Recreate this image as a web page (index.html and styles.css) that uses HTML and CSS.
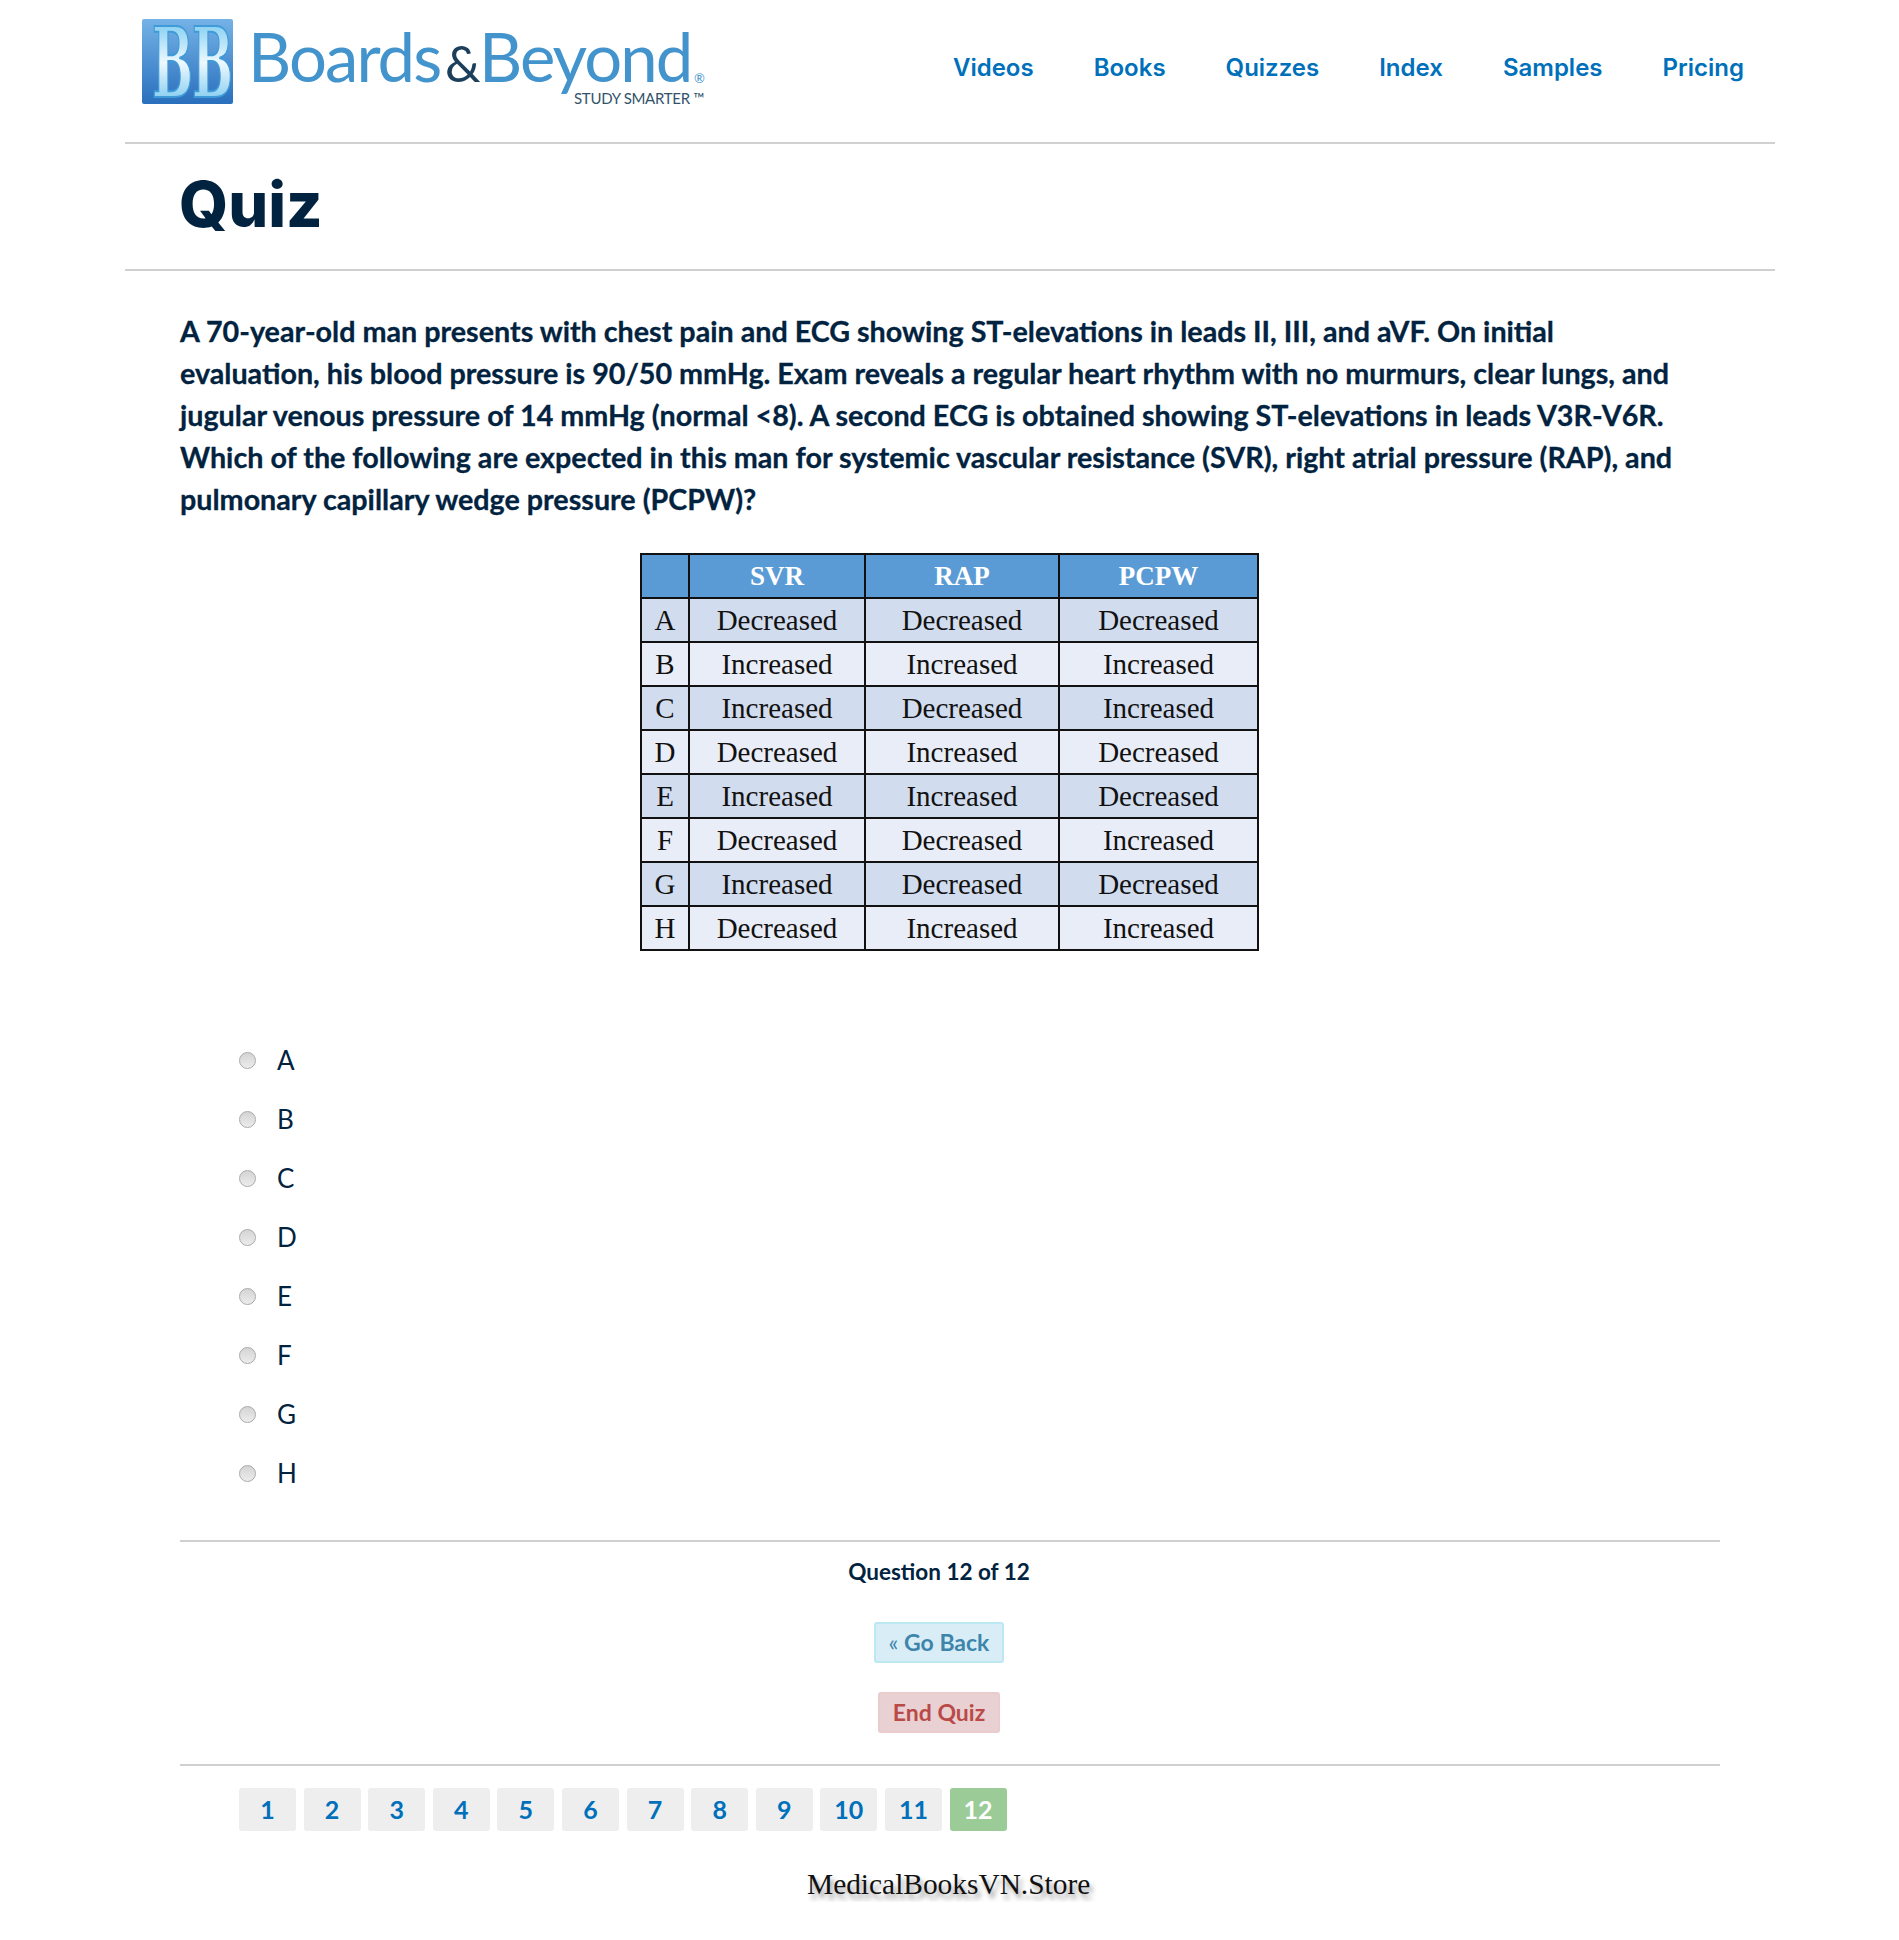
FILE: index.html
```html
<!DOCTYPE html>
<html lang="en">
<head>
    <meta charset="UTF-8">
    <title>Quiz</title>
    <link rel="stylesheet" href="styles.css">
</head>
<body>
    <div class="page">
        <div class="header">
            <svg class="logo" width="580" height="120" viewBox="0 0 580 120">
                <defs>
                    <linearGradient id="tile" x1="0" y1="0" x2="0" y2="1">
                        <stop offset="0" stop-color="#74b2e6"/>
                        <stop offset="1" stop-color="#2a6fbd"/>
                    </linearGradient>
                    <linearGradient id="letter" x1="0" y1="0" x2="0" y2="1">
                        <stop offset="0" stop-color="#58bdec"/>
                        <stop offset="0.5" stop-color="#eef9fe"/>
                        <stop offset="1" stop-color="#4fb6e9"/>
                    </linearGradient>
                </defs>
                <rect x="2" y="19" width="91" height="85" rx="2" fill="url(#tile)"/>
                <text class="logo-bb" transform="translate(12 97) scale(0.5 1)" fill="url(#letter)" stroke="#3f9ad8" stroke-width="2">BB</text>
                <text class="logo-name" y="82"><tspan x="108">Boards</tspan><tspan class="logo-amp" x="305">&amp;</tspan><tspan x="339">Beyond</tspan></text>
                <text class="logo-mark" x="554" y="83">®</text>
                <text class="logo-tag" x="434" y="104">STUDY SMARTER ™</text>
            </svg>
            <div class="nav">
                <a href="#">Videos</a>
                <a href="#">Books</a>
                <a href="#">Quizzes</a>
                <a href="#">Index</a>
                <a href="#">Samples</a>
                <a href="#">Pricing</a>
            </div>
        </div>
        <div class="titlebar"><h1>Quiz</h1></div>
        <div class="content">
            <p class="question">A 70-year-old man presents with chest pain and ECG showing ST-elevations in leads II, III, and aVF. On initial<br>evaluation, his blood pressure is 90/50 mmHg. Exam reveals a regular heart rhythm with no murmurs, clear lungs, and<br>jugular venous pressure of 14 mmHg (normal &lt;8). A second ECG is obtained showing ST-elevations in leads V3R-V6R.<br>Which of the following are expected in this man for systemic vascular resistance (SVR), right atrial pressure (RAP), and<br>pulmonary capillary wedge pressure (PCPW)?</p>
            <table class="grid">
                <tr><th></th><th>SVR</th><th>RAP</th><th>PCPW</th></tr>
                <tr><td>A</td><td>Decreased</td><td>Decreased</td><td>Decreased</td></tr>
                <tr><td>B</td><td>Increased</td><td>Increased</td><td>Increased</td></tr>
                <tr><td>C</td><td>Increased</td><td>Decreased</td><td>Increased</td></tr>
                <tr><td>D</td><td>Decreased</td><td>Increased</td><td>Decreased</td></tr>
                <tr><td>E</td><td>Increased</td><td>Increased</td><td>Decreased</td></tr>
                <tr><td>F</td><td>Decreased</td><td>Decreased</td><td>Increased</td></tr>
                <tr><td>G</td><td>Increased</td><td>Decreased</td><td>Decreased</td></tr>
                <tr><td>H</td><td>Decreased</td><td>Increased</td><td>Increased</td></tr>
            </table>
            <div class="answers">
                <label class="answer"><input type="radio" name="answer">A</label>
                <label class="answer"><input type="radio" name="answer">B</label>
                <label class="answer"><input type="radio" name="answer">C</label>
                <label class="answer"><input type="radio" name="answer">D</label>
                <label class="answer"><input type="radio" name="answer">E</label>
                <label class="answer"><input type="radio" name="answer">F</label>
                <label class="answer"><input type="radio" name="answer">G</label>
                <label class="answer"><input type="radio" name="answer">H</label>
            </div>
            <div class="controls">
                <div class="progress">Question 12 of 12</div>
                <a class="button back" href="#"><span class="arrows">«</span> Go Back</a>
                <a class="button end" href="#">End Quiz</a>
            </div>
            <div class="pages">
                <a href="#">1</a>
                <a href="#">2</a>
                <a href="#">3</a>
                <a href="#">4</a>
                <a href="#">5</a>
                <a href="#">6</a>
                <a href="#">7</a>
                <a href="#">8</a>
                <a href="#">9</a>
                <a href="#">10</a>
                <a href="#">11</a>
                <a class="current" href="#">12</a>
            </div>
        </div>
        <div class="watermark">MedicalBooksVN.Store</div>
    </div>
</body>
</html>
```

FILE: styles.css
```css
body {
    margin: 0;
    background: #fff;
    color: #02233f;
    font-family: "Lato", "Liberation Sans", sans-serif;
}

a {
    text-decoration: none;
}

.page {
    width: 1650px;
    margin-left: 125px;
}

.header {
    height: 142px;
    display: flex;
    justify-content: space-between;
    border-bottom: 2px solid #d0d0d0;
}

.logo {
    margin-left: 15px;
}

.logo-bb {
    font-family: "DejaVu Serif", serif;
    font-size: 97px;
    font-weight: 700;
    letter-spacing: -2px;
}

.logo-name {
    font-family: "Lato", sans-serif;
    font-size: 67px;
    fill: #4394cd;
    letter-spacing: -1.9px;
}

.logo-amp {
    font-size: 50px;
    fill: #1c3f5c;
}

.logo-mark {
    font-family: "Lato", sans-serif;
    font-size: 13px;
    fill: #4394cd;
}

.logo-tag {
    font-family: "Lato", sans-serif;
    font-size: 15px;
    fill: #33536b;
    letter-spacing: -0.3px;
}

.nav {
    display: flex;
    gap: 60px;
    padding: 51px 31px 0 0;
}

.nav a {
    height: 34px;
    color: #0070bb;
    font-family: "Inter", sans-serif;
    font-size: 24px;
    font-weight: 600;
    line-height: 34px;
}

.titlebar {
    height: 125px;
    padding-left: 54px;
    border-bottom: 2px solid #d0d0d0;
}

h1 {
    margin: 0;
    font-family: "Inter", sans-serif;
    font-size: 63px;
    font-weight: 800;
    line-height: 120px;
}

.content {
    padding: 0 55px;
}

.question {
    margin: 39px 0 0;
    font-size: 28.7px;
    font-weight: 700;
    line-height: 42px;
    white-space: nowrap;
    -webkit-text-stroke: 0.3px #02233f;
}

table.grid {
    width: 619px;
    margin: 33px auto 0 460px;
    border-collapse: collapse;
    border: 2px solid #111;
    color: #111;
    font-family: "Liberation Serif", serif;
    font-size: 29px;
    text-align: center;
    table-layout: fixed;
}

.grid th, .grid td {
    height: 42px;
    padding: 0;
    border: 2px solid #111;
    background: #e9edf7;
}

.grid th {
    background: #5b9bd5;
    color: #fff;
    font-size: 27px;
    font-weight: 700;
}

.grid tr:nth-child(even) td {
    background: #d1dcee;
}

.grid tr > :nth-child(1) { width: 46px; }
.grid tr > :nth-child(2) { width: 174px; }
.grid tr > :nth-child(3) { width: 192px; }

.answers {
    margin-top: 92px;
    padding-left: 59px;
    display: flex;
    flex-direction: column;
    gap: 25px;
}

.answer {
    height: 34px;
    display: flex;
    align-items: center;
    gap: 21px;
    font-size: 26px;
    font-weight: 400;
}

.answer input {
    width: 17px;
    height: 17px;
    margin: 0;
    appearance: none;
    border: 1px solid #aaa;
    border-radius: 50%;
    background: linear-gradient(#d4d4d4, #ececec);
}

.controls {
    margin-top: 50px;
    padding-right: 22px;
    border-top: 2px solid #d0d0d0;
    display: flex;
    flex-direction: column;
    align-items: center;
}

.progress {
    margin-top: 15px;
    margin-bottom: 35px;
    font-size: 22.5px;
    font-weight: 700;
    line-height: 30px;
}

.button {
    height: 41px;
    padding: 0 13px;
    box-sizing: border-box;
    border-radius: 3px;
    font-size: 23px;
    font-weight: 700;
    line-height: 37px;
}

.button.back {
    border: 2px solid #bce8f1;
    background: #d9edf7;
    color: #3d85ab;
}

.button.back .arrows {
    font-weight: 400;
}

.button.end {
    margin-top: 29px;
    border: 2px solid #ebcccc;
    background: #e9d0d3;
    color: #b94a48;
}

.pages {
    margin-top: 31px;
    padding: 22px 0 0 59px;
    border-top: 2px solid #d0d0d0;
    display: flex;
    gap: 7.6px;
}

.pages a {
    width: 57px;
    height: 43px;
    border-radius: 3px;
    background: #eee;
    color: #0070bb;
    font-size: 25px;
    font-weight: 700;
    line-height: 43px;
    text-align: center;
}

.pages a.current {
    background: #9bcc98;
    color: #fff;
}

.watermark {
    margin-top: 35px;
    padding-left: 682px;
    color: #111;
    font-family: "Liberation Serif", serif;
    font-size: 29.4px;
    line-height: 36px;
    text-shadow: 3px 5px 5px rgba(0, 0, 0, 0.4);
}
```
